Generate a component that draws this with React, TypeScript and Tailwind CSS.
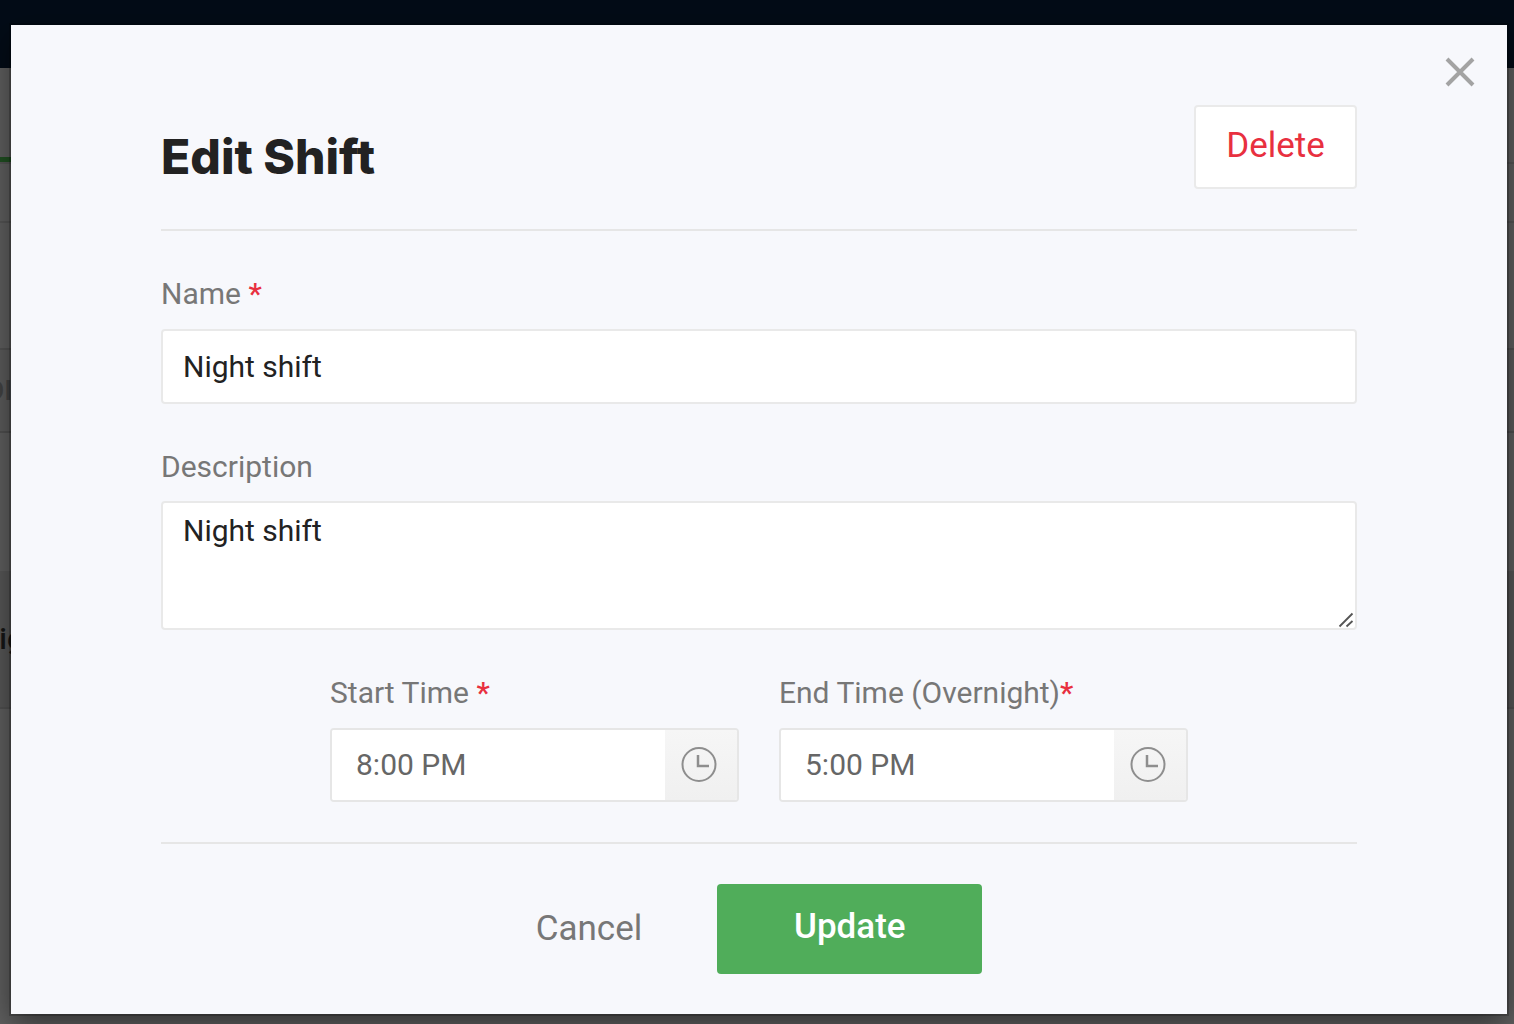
import { useState } from "react";

function Backdrop() {
  return (
    <div aria-hidden="true" className="absolute inset-0 flex flex-col overflow-hidden bg-[#606060]">
      <div className="h-[68px] shrink-0 bg-[#030c17]" />
      <div className="flex h-[96px] shrink-0 items-end border-b-2 border-[#555555]">
        <div className="h-[5px] w-40 bg-[#205022]" />
      </div>
      <div className="h-[59px] shrink-0 border-b-2 border-[#555555]" />
      <div className="h-[127px] shrink-0 border-b-2 border-[#535353]" />
      <div className="flex h-[83px] shrink-0 items-center border-b-2 border-[#505050] bg-[#5c5c5c]">
        <span className="-ml-[14px] text-[28px] font-medium leading-8 text-[#434343]">DI</span>
      </div>
      <div className="h-[138px] shrink-0" />
      <div className="flex h-[138px] shrink-0 items-center border-b-2 border-[#515151] bg-[#585858]">
        <span className="-ml-[22px] text-[30px] font-medium leading-9 text-[#161616]">Night shift</span>
      </div>
    </div>
  );
}

function Required() {
  return <span className="font-medium text-[#e8303f]">*</span>;
}

function ClockIcon() {
  return (
    <svg width="36" height="36" viewBox="0 0 36 36" fill="none" stroke="#8e8e8e" strokeWidth="2" aria-hidden="true">
      <circle cx="18" cy="17.5" r="16.5" />
      <path d="M17 8v11h11" strokeWidth="2.5" />
    </svg>
  );
}

function TimeField({ id, label, spaced, initial }: { id: string; label: string; spaced?: boolean; initial: string }) {
  const [value, setValue] = useState(initial);
  return (
    <div className="w-[409px]">
      <label htmlFor={id} className="block text-[30px] leading-9 text-[#777777]">
        {label}
        {spaced ? " " : ""}
        <Required />
      </label>
      <div className="mt-[17px] flex h-[74px] overflow-hidden rounded border-2 border-[#e6e6e6] bg-white">
        <input
          id={id}
          type="text"
          value={value}
          onChange={(e) => setValue(e.target.value)}
          className="min-w-0 flex-1 bg-white pl-6 text-[30px] leading-9 text-[#666666] outline-none"
        />
        <button
          type="button"
          aria-label={"Pick " + label}
          className="flex w-[72px] items-center justify-center bg-linear-to-b from-[#f6f6f6] to-[#f0f0f0] pr-1"
        >
          <ClockIcon />
        </button>
      </div>
    </div>
  );
}

export default function App() {
  const [name, setName] = useState("Night shift");
  const [description, setDescription] = useState("Night shift");
  return (
    <div className="relative min-h-screen overflow-hidden pt-[25px] pr-[7px] pb-[10px] pl-[11px] font-['Roboto',sans-serif]">
      <Backdrop />
      <div
        role="dialog"
        aria-modal="true"
        aria-labelledby="dialog-title"
        className="relative bg-[#f7f8fc] px-[150px] pt-20 pb-10 shadow-[0_0_0_2px_rgba(0,0,0,0.2),0_10px_30px_rgba(0,0,0,0.5)]"
      >
        <button type="button" aria-label="Close" className="absolute top-8 right-8">
          <svg width="30" height="30" viewBox="0 0 30 30" stroke="#a3a3a3" strokeWidth="4" aria-hidden="true">
            <path d="M2 2l26 26M28 2L2 28" />
          </svg>
        </button>

        <header className="flex items-start justify-between border-b-2 border-[#e6e6e6] pb-10">
          <h1 id="dialog-title" className="pt-6 font-['Inter',sans-serif] text-[48px] leading-[56px] font-extrabold text-[#222222]">
            Edit Shift
          </h1>
          <button
            type="button"
            className="h-[84px] w-[163px] rounded border-2 border-[#eaeaea] bg-white pb-0.5 text-[35px] leading-10 text-[#e8303f]"
          >
            Delete
          </button>
        </header>

        <form onSubmit={(e) => e.preventDefault()}>
          <div className="mt-[45px]">
            <label htmlFor="shift-name" className="block text-[30px] leading-9 text-[#777777]">
              Name <Required />
            </label>
            <input
              id="shift-name"
              type="text"
              value={name}
              onChange={(e) => setName(e.target.value)}
              className="mt-[17px] block h-[75px] w-full rounded border-2 border-[#e9e9e9] bg-white px-5 text-[30px] leading-9 text-[#222222] outline-none"
            />
          </div>

          <div className="mt-[45px]">
            <label htmlFor="shift-description" className="block text-[30px] leading-9 text-[#777777]">
              Description
            </label>
            <div className="relative mt-4">
              <textarea
                id="shift-description"
                value={description}
                onChange={(e) => setDescription(e.target.value)}
                className="block h-[129px] w-full resize-none rounded border-2 border-[#e9e9e9] bg-white px-5 py-2.5 text-[30px] leading-9 text-[#222222] outline-none"
              />
              <svg
                width="16"
                height="16"
                viewBox="0 0 16 16"
                stroke="#555555"
                strokeWidth="1.8"
                aria-hidden="true"
                className="pointer-events-none absolute right-[3px] bottom-[2px]"
              >
                <path d="M1.500 14.500L14.500 1.500M8.500 14.500L14.500 9" />
              </svg>
            </div>
          </div>

          <div className="mt-[45px] flex justify-center gap-10 border-b-2 border-[#e6e6e6] pb-10">
            <TimeField id="start-time" label="Start Time" spaced initial="8:00 PM" />
            <TimeField id="end-time" label="End Time (Overnight)" initial="5:00 PM" />
          </div>

          <div className="mt-10 flex items-center justify-center gap-[75px]">
            <button type="button" className="text-[35px] leading-10 text-[#777777]">
              Cancel
            </button>
            <button
              type="submit"
              className="h-[90px] w-[265px] rounded bg-[#50ad5a] pb-1 text-[35px] leading-10 font-medium text-white"
            >
              Update
            </button>
          </div>
        </form>
      </div>
    </div>
  );
}
